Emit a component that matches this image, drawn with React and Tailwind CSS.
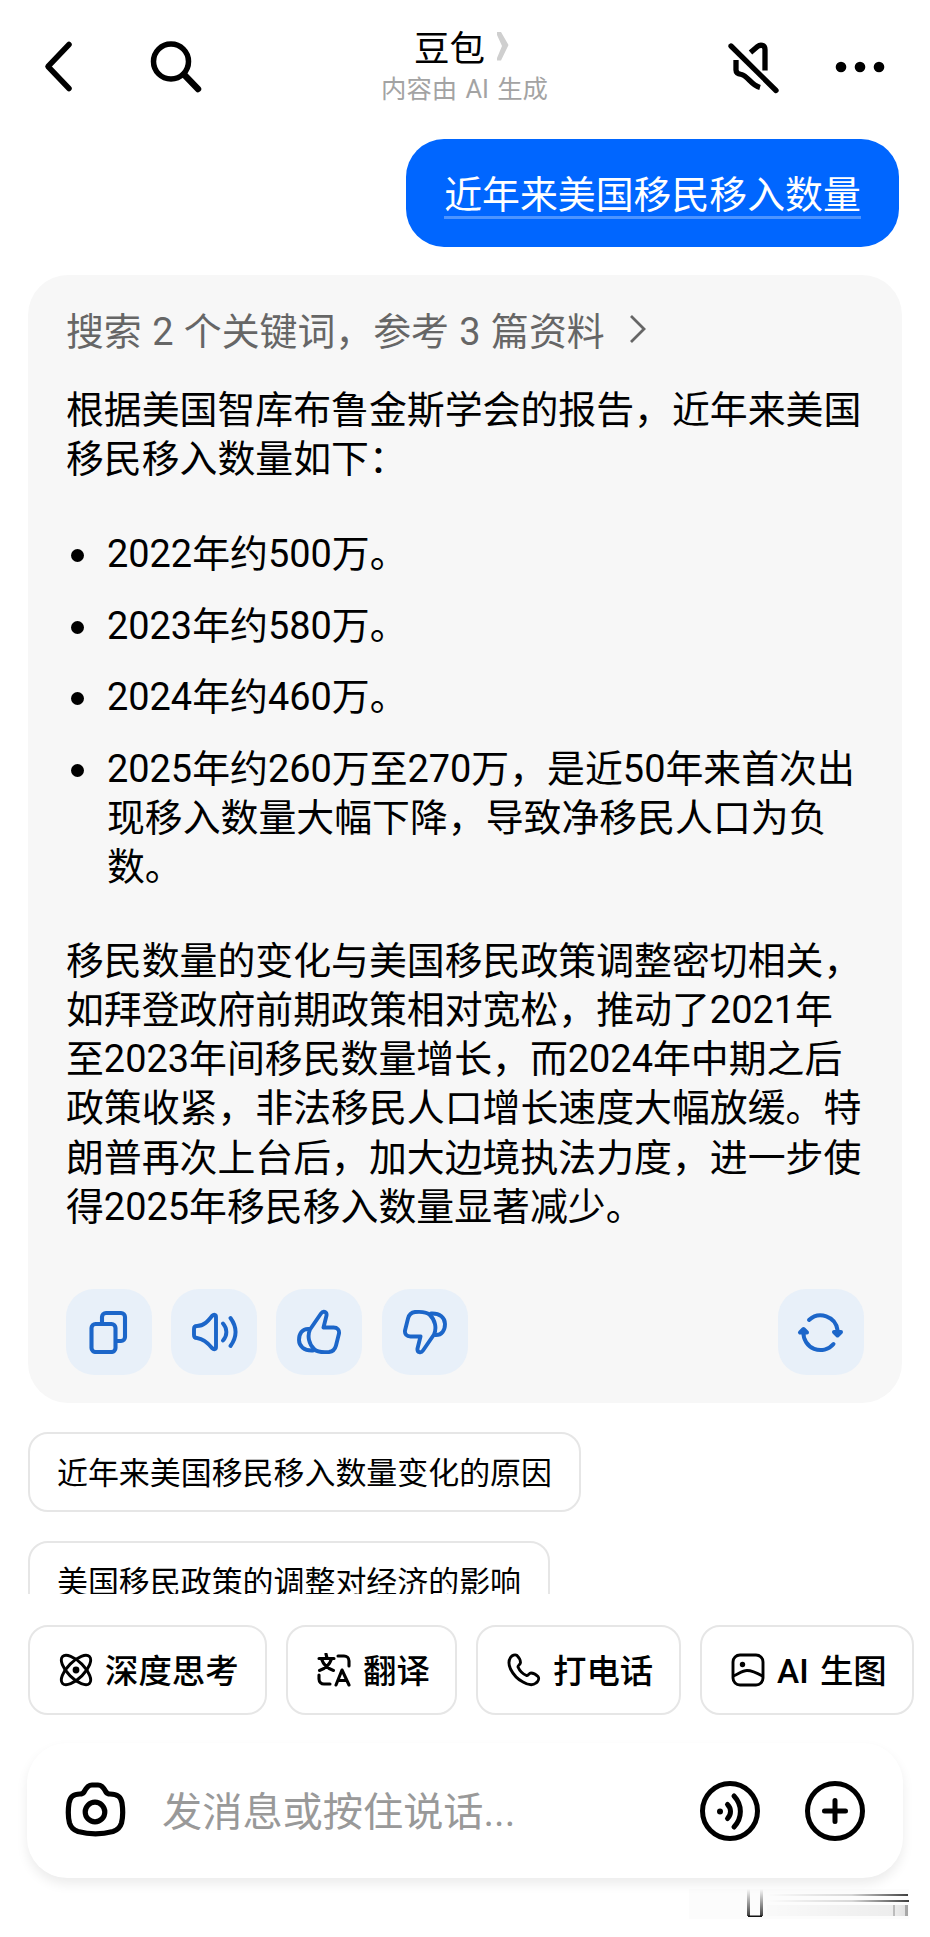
import React, { useState } from 'react';

const tools = [
  { id: 'think', label: '深度思考', width: 'w-[239px]' },
  { id: 'translate', label: '翻译', width: 'w-[171px]' },
  { id: 'call', label: '打电话', width: 'w-[205px]' },
  { id: 'image', label: 'AI 生图', width: 'w-[214px]' },
];

const years = [
  ['2022年约500万。'],
  ['2023年约580万。'],
  ['2024年约460万。'],
  ['2025年约260万至270万，是近50年来首次出', '现移入数量大幅下降，导致净移民人口为负', '数。'],
];

const summary = [
  '移民数量的变化与美国移民政策调整密切相关，',
  '如拜登政府前期政策相对宽松，推动了2021年',
  '至2023年间移民数量增长，而2024年中期之后',
  '政策收紧，非法移民人口增长速度大幅放缓。特',
  '朗普再次上台后，加大边境执法力度，进一步使',
  '得2025年移民移入数量显著减少。',
];

const Lines = ({ lines }) => lines.map(line => (
  <span key={line} className="block whitespace-nowrap">{line}</span>
));

const Icon = ({ size, box = 24, stroke = 2, className = '', children }) => (
  <svg
    width={size}
    height={size}
    viewBox={`0 0 ${box} ${box}`}
    fill="none"
    stroke="currentColor"
    strokeWidth={stroke}
    strokeLinecap="round"
    strokeLinejoin="round"
    className={`shrink-0 ${className}`}
  >
    {children}
  </svg>
);

const ToolIcon = ({ id }) => {
  if (id === 'think') {
    return (
      <Icon size={34} box={34} stroke={2.9}>
        <ellipse cx="17" cy="17" rx="19" ry="8.3" transform="rotate(45 17 17)" />
        <ellipse cx="17" cy="17" rx="19" ry="8.3" transform="rotate(-45 17 17)" />
        <circle cx="17" cy="17" r="3.4" fill="currentColor" stroke="none" />
      </Icon>
    );
  }
  if (id === 'translate') {
    return (
      <Icon size={34} box={34} stroke={3.1}>
        <path d="M2 5.5h15M9 1l1 4M4.500 6c2 6 6 9.500 12 11.500M14.500 6c-2 6-6 9.500-12 11.500" />
        <path d="M21 3h6a5 5 0 0 1 5 5v5" />
        <path d="M2 22v4a5 5 0 0 0 5 5h6" />
        <path d="M19 32l6-15 7 15M21.500 27.500h8.500" />
      </Icon>
    );
  }
  if (id === 'call') {
    return (
      <Icon size={34} box={34} stroke={2.9}>
        <path d="M3.500 4.500C5 2.500 8 1 10 2.500c2 2 3.500 5 3.500 7s-3 3-2.500 4.500c1.500 3.500 5 7 8.500 8.500 1.500.5 2.500-2.500 4.500-2.500s5 1.500 7 3.500c1.500 2 0 5-2 6.500-3 2.500-8 2-13-1C11 26.500 6 21 3.500 16 1.500 11.500 1.500 7.500 3.500 4.500z" />
      </Icon>
    );
  }
  return (
    <Icon size={34} box={34} stroke={2.9}>
      <rect x="2" y="2" width="30" height="30" rx="7" />
      <circle cx="11.500" cy="11.500" r="2.700" fill="currentColor" stroke="none" />
      <path d="M2.500 23c5-2 9-5.500 13.500-5.500S27 20.500 31.500 23" />
    </Icon>
  );
};

const ActionButton = ({ children, className = '' }) => (
  <button className={`flex h-[86px] w-[86px] items-center justify-center rounded-[28px] bg-[#e8f0f9] text-[#1c66c9] ${className}`}>
    {children}
  </button>
);

const Header = () => (
  <header className="flex h-[139px] shrink-0 items-start pl-[42px] pr-[43px] pt-[40px]">
    <div className="flex flex-1 gap-[75px]">
      <svg width="32" height="54" viewBox="0 0 32 54" fill="none" stroke="currentColor" strokeWidth="5.500" strokeLinecap="round" strokeLinejoin="round">
        <path d="M27 4.500L6 26.500l21 22" />
      </svg>
      <Icon size={54} box={54} stroke={5.500}>
        <circle cx="22" cy="21.500" r="17.500" />
        <path d="M35 34.500L49 49" strokeWidth="6.500" />
      </Icon>
    </div>
    <div className="-mt-[17px] flex flex-col items-center">
      <div className="flex items-center gap-[11px] pr-[6px]">
        <h1 className="pt-[6px] text-[35.500px] leading-[40px]">豆包</h1>
        <svg width="13" height="29" viewBox="0 0 13 29" fill="#cfcfcf" className="mt-px">
          <path d="M1 0h4l7.500 13L5 28.500H1V26l5-12L1 3z" />
        </svg>
      </div>
      <p className="mt-[2.500px] text-[25.400px] leading-[34px] text-[#a3a3a3] [word-spacing:2px]">内容由 AI 生成</p>
    </div>
    <div className="flex flex-1 justify-end gap-[54px]">
      <Icon size={54} box={54} stroke={5.300}>
        <path d="M6 6l45 44.500" />
        <path d="M25.500 12.500l7-6c2.500-2 7.500-2 7.500 3V30.500" strokeLinecap="butt" />
        <path d="M11 20v10c0 3 2 4 5.500 4.500C23 36 26 45 35 47.500" strokeLinecap="butt" />
      </Icon>
      <svg width="54" height="54" viewBox="0 0 54 54" fill="currentColor">
        <circle cx="8" cy="27" r="5.300" />
        <circle cx="27" cy="27" r="5.300" />
        <circle cx="46" cy="27" r="5.300" />
      </svg>
    </div>
  </header>
);

const Answer = () => (
  <section className="mx-[28px] mt-[28px] h-[1128px] shrink-0 rounded-[40px] bg-[#f7f7f7] pl-[38px] pr-[38px] pt-[31.500px]">
    <div className="flex items-center gap-[25px] text-[#666]">
      <span className="whitespace-nowrap leading-[50px] [word-spacing:1px]">搜索 2 个关键词，参考 3 篇资料</span>
      <svg width="16" height="30" viewBox="0 0 16 30" fill="none" stroke="currentColor" strokeWidth="2.800" className="-mt-[5px]">
        <path d="M1 2l13 13L1 28" />
      </svg>
    </div>
    <p className="mt-[29px]">
      <Lines lines={['根据美国智库布鲁金斯学会的报告，近年来美国', '移民移入数量如下：']} />
    </p>
    <ul className="mt-[46px] flex flex-col gap-[22.400px]">
      {years.map(lines => (
        <li key={lines[0]} className="flex pl-[5px]">
          <span className="mr-[23px] mt-[19px] h-[13px] w-[13px] shrink-0 rounded-full bg-black" />
          <div><Lines lines={lines} /></div>
        </li>
      ))}
    </ul>
    <p className="mt-[44.500px]">
      <Lines lines={summary} />
    </p>
    <div className="mt-[56.500px] flex gap-[19.200px]">
      <ActionButton>
        <Icon size={44} box={44} stroke={4.1}>
          <rect x="4.500" y="14" width="24" height="28" rx="4" />
          <path d="M15 13V7a4 4 0 0 1 4-4h15a4 4 0 0 1 4 4v20a4 4 0 0 1-4 4h-4" />
        </Icon>
      </ActionButton>
      <ActionButton>
        <Icon size={48} box={48} stroke={3.9}>
          <path d="M4 21c0-2 1-3 3-3 7 0 11-5 15-10 2-2 4-1.500 4 1v30c0 2.500-2 3-4 1-4-5-8-9-15-10-2 0-3-1-3-3z" />
          <path d="M33 15.500c4.500 5 4.500 12 0 17M40.500 10c6.500 9 6.500 19 0 28" />
        </Icon>
      </ActionButton>
      <ActionButton>
        <Icon size={46} box={46} stroke={3.9}>
          <path d="M14 20.500L25 4.500c2-3 6-2 5.500 2L27.500 18.500h10c4 0 6 2.500 5.500 6l-3 12c-1 4-3 6-7 6.500-6 .5-12 0-15-3-5-5-7-13-4-19.500z" />
          <path d="M13 20C6 19.500 3 25 3 31s5 11 14 10.500" />
        </Icon>
      </ActionButton>
      <ActionButton>
        <Icon size={46} box={46} stroke={3.9} className="rotate-180">
          <path d="M14 20.500L25 4.500c2-3 6-2 5.500 2L27.500 18.500h10c4 0 6 2.500 5.500 6l-3 12c-1 4-3 6-7 6.500-6 .5-12 0-15-3-5-5-7-13-4-19.500z" />
          <path d="M13 20C6 19.500 3 25 3 31s5 11 14 10.500" />
        </Icon>
      </ActionButton>
      <ActionButton className="ml-auto">
        <Icon size={48} box={48} stroke={4}>
          <path d="M12 12a17 17 0 0 1 28.500 10" />
          <path d="M6.500 24a17 17 0 0 0 30 12" />
          <path d="M37 24h7l-3.500 3.500zM3 24.500h7l-3.500-3.500z" fill="currentColor" />
        </Icon>
      </ActionButton>
    </div>
  </section>
);

// Leftover streaks along the bottom edge of the screen
const Streaks = () => (
  <svg width="224" height="34" viewBox="0 0 224 34" className="ml-auto mr-[19px] mt-[9px] shrink-0">
    <defs>
      <linearGradient id="fadeX">
        <stop offset="0" stopColor="#000" stopOpacity="0" />
        <stop offset="0.6" stopColor="#000" stopOpacity="0.15" />
        <stop offset="1" stopColor="#000" stopOpacity="0.75" />
      </linearGradient>
      <linearGradient id="fadeY" x1="0" y1="0" x2="0" y2="1">
        <stop offset="0" stopColor="#000" stopOpacity="0" />
        <stop offset="1" stopColor="#000" stopOpacity="0.75" />
      </linearGradient>
      <linearGradient id="haze">
        <stop offset="0" stopColor="#000" stopOpacity="0.01" />
        <stop offset="0.9" stopColor="#000" stopOpacity="0.06" />
        <stop offset="1" stopColor="#000" stopOpacity="0.12" />
      </linearGradient>
    </defs>
    <rect x="2" y="2" width="220" height="30" fill="#000" opacity="0.01" />
    <rect x="80" y="18" width="141" height="11" fill="url(#haze)" />
    <rect x="206" y="18" width="2" height="11" fill="#000" opacity="0.2" />
    <rect x="218" y="18" width="3" height="11" fill="#000" opacity="0.25" />
    <rect x="80" y="7" width="141" height="2" fill="url(#fadeX)" />
    <rect x="80" y="13" width="142" height="2" fill="url(#fadeX)" />
    <rect x="60" y="2" width="3" height="27" fill="url(#fadeY)" />
    <rect x="73" y="2" width="3" height="27" fill="url(#fadeY)" />
    <rect x="61" y="28.500" width="14" height="1.500" fill="#111" />
  </svg>
);

const App = () => {
  const [message, setMessage] = useState('');

  return (
    <div className="flex h-[1937px] w-[930px] flex-col overflow-hidden bg-white font-[Roboto,'Noto_Sans_CJK_SC',sans-serif] text-[37.880px] leading-[49.2px] text-black">
      <Header />

      <div className="mr-[31px] flex h-[108px] w-[493px] shrink-0 items-start justify-center self-end rounded-[38px] bg-[#0066ff] pt-[30px] text-white">
        <span className="h-[50px] whitespace-nowrap border-b-[3px] border-[#4d94ff] pt-[3px] leading-[46px]">近年来美国移民移入数量</span>
      </div>

      <Answer />

      <div className="mt-[29px] flex h-[162px] shrink-0 flex-col items-start gap-[29px] overflow-hidden pl-[28px] text-[30.940px]">
        {['近年来美国移民移入数量变化的原因', '美国移民政策的调整对经济的影响'].map(text => (
          <button key={text} className="flex h-[80px] shrink-0 items-center whitespace-nowrap rounded-[20px] border-2 border-[#e6e6e6] px-[27px] pt-[4px]">
            {text}
          </button>
        ))}
      </div>

      <div className="mt-[31px] flex shrink-0 gap-[19px] pl-[28px] text-[33.4px] font-medium">
        {tools.map(tool => (
          <button key={tool.id} className={`flex h-[90px] shrink-0 items-center gap-[12px] whitespace-nowrap rounded-[20px] border-2 border-[#e6e6e6] pl-[29px] ${tool.width}`}>
            <ToolIcon id={tool.id} />
            <span className="mt-[4px] [word-spacing:3px]">{tool.label}</span>
          </button>
        ))}
      </div>

      <form
        className="mx-[27px] mt-[28px] flex h-[135px] shrink-0 items-center rounded-[40px] bg-white pl-[37px] pr-[37px] shadow-[0_6px_12px_rgba(0,0,0,0.08)]"
        onSubmit={e => e.preventDefault()}
      >
        <Icon size={62} box={62} stroke={5.200} className="-mt-[3px]">
          <path d="M20 14c2-4 4-7 8-7h6c4 0 6 3 8 7 1 1.500 2 2 4 2 8 0 11 3 12 9 1 7 1 14-.5 20-1.500 5-4 7-8.500 8.500-11 3-24 3-35 0C9.500 52 7 50 5.500 45 4 39 4 32 5 25c1-6 4-9 11-9 2 0 3-.5 4-2z" />
          <circle cx="31" cy="34" r="9.800" />
        </Icon>
        <input
          className="mt-[4px] ml-[36px] min-w-0 flex-1 bg-transparent text-[40.2px] leading-[56px] outline-none placeholder:text-[#999]"
          value={message}
          onChange={e => setMessage(e.target.value)}
          placeholder="发消息或按住说话..."
        />
        <Icon size={62} box={62} stroke={5}>
          <circle cx="31" cy="31" r="27.500" />
          <circle cx="21" cy="31.500" r="3" fill="currentColor" stroke="none" />
          <path d="M28.500 24.500c4 4 4 10 0 14M35 16c8.500 9 8.500 22 0 31" />
        </Icon>
        <Icon size={62} box={62} stroke={5} className="ml-[43px]">
          <circle cx="31" cy="31" r="27.500" />
          <path d="M31 20.500v21M20.500 31h21" />
        </Icon>
      </form>

      <Streaks />
    </div>
  );
};

export default App;
